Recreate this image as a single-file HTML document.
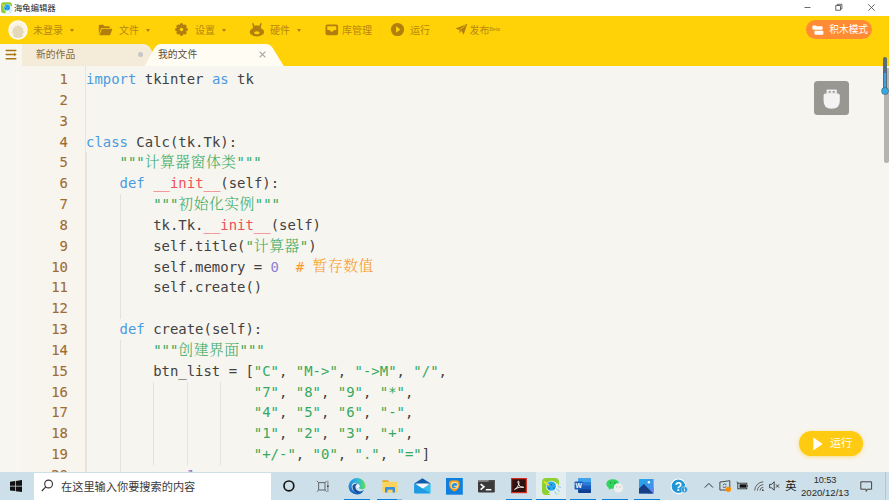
<!DOCTYPE html>
<html lang="zh-CN">
<head>
<meta charset="utf-8">
<title>海龟编辑器</title>
<style>
html,body{margin:0;padding:0;}
body{width:889px;height:500px;overflow:hidden;position:relative;background:#f7f5f0;font-family:"Liberation Sans","Noto Sans CJK SC",sans-serif;}
.abs{position:absolute;}
#titlebar{position:absolute;left:0;top:0;width:889px;height:16px;background:#fff;}
#titlebar .ttl{position:absolute;left:14px;top:0;height:16px;line-height:16px;font-size:8.350px;color:#1c1c1c;white-space:nowrap;}
#toolbar{position:absolute;left:0;top:16px;width:889px;height:49.500px;background:#ffd107;}
.mi{position:absolute;top:1px;height:28px;line-height:28px;font-size:10px;color:#b8880f;white-space:nowrap;}
.caret{position:absolute;top:12.5px;width:0;height:0;border-left:2.5px solid transparent;border-right:2.5px solid transparent;border-top:3px solid #b27f0e;}
#tabs{position:absolute;left:0;top:43.5px;width:889px;height:22px;z-index:3;}
.tabtxt{position:absolute;top:0;height:21.5px;line-height:21.5px;font-size:9.8px;white-space:nowrap;}
#editor{position:absolute;left:0;top:65.500px;width:889px;height:407px;background:#f7f5f0;overflow:hidden;}
#leftstrip{position:absolute;left:0;top:0;width:22px;height:407px;background:#f8f6f1;}
#gutter{position:absolute;left:22px;top:0;width:63px;height:407px;background:#f7f5ee;}
#gline{position:absolute;left:85px;top:0;width:1px;height:407px;background:#efe5ca;}
.ln{position:absolute;left:22px;width:46px;text-align:right;height:20.83px;line-height:20.83px;font-family:"DejaVu Sans Mono","Liberation Mono",monospace;font-size:13.947px;color:#9e6c32;-webkit-text-stroke:0.100px #9e6c32;}
.cl{position:absolute;left:86px;height:20.83px;line-height:20.83px;font-family:"DejaVu Sans Mono","Liberation Mono","Noto Serif CJK SC",monospace;font-size:13.947px;color:#414141;white-space:pre;}
.z{font-size:14.800px;letter-spacing:0.500px;font-weight:300;line-height:0;position:relative;top:-0.200px;}
.k{color:#4a9be0;}
.s{color:#35a95e;}
.r{color:#ee5058;}
.n{color:#8b7fd6;}
.c{color:#f99a27;}
.guide{position:absolute;width:1px;background:#e6e2da;}
#taskbar{position:absolute;left:0;top:471.800px;width:889px;height:28.200px;background:#cddfe8;}
#search{position:absolute;left:34px;top:1.200px;width:237px;height:28px;background:#fff;}
#search span{position:absolute;left:27px;top:0;height:28px;line-height:29px;font-size:11.2px;color:#3a3a3a;white-space:nowrap;}
.ul{position:absolute;top:26.800px;height:2px;background:#0a7fd9;}
</style>
</head>
<body>

<div id="titlebar">
  <svg class="abs" style="left:0.700px;top:1.900px" width="13" height="12" viewBox="0 0 20 18">
    <rect x="0" y="0" width="17" height="17" rx="4" fill="#8ed032"/>
    <path d="M6 15.600 Q11 12.600 15.400 5 L17 8 L17 13 Q17 17 13 17 H9 Z" fill="#f4fbff"/>
    <circle cx="9.700" cy="8.400" r="5.600" fill="#f2fbff"/>
    <circle cx="9.300" cy="8.100" r="4.700" fill="#2ba7ee"/>
    <path d="M8.600 5.600 L10.400 7 L9.200 7.600 Z M6 9.200 L8.200 10.200 L6.800 11.200 Z M10.800 10 L12.400 9.200 L12.200 11 Z" fill="#1b4f8a"/>
    <path d="M2.200 3.800 L6.600 7" stroke="#f6e22a" stroke-width="1.500" stroke-linecap="round"/>
    <path d="M12.400 13 L14.400 16 M14.400 10.800 L17.400 13.200" stroke="#7fd0e8" stroke-width="1" stroke-linecap="round"/>
  </svg>
  <div class="ttl">海龟编辑器</div>
  <svg class="abs" style="left:800px;top:0" width="89" height="16" viewBox="0 0 89 16">
    <path d="M4.5 7.5 H10.5" stroke="#444" stroke-width="0.8" fill="none"/>
    <rect x="35.8" y="5.6" width="4.6" height="4.6" stroke="#444" stroke-width="0.8" fill="#fff"/>
    <path d="M37.3 5.6 V4.3 H41.9 V8.9 H40.4" stroke="#444" stroke-width="0.8" fill="none"/>
    <path d="M68.3 4.3 L74.7 10.7 M74.7 4.3 L68.3 10.7" stroke="#444" stroke-width="0.8" fill="none"/>
  </svg>
</div>

<div id="toolbar">
  <!-- avatar -->
  <svg class="abs" style="left:7.050px;top:2.500px" width="22" height="22" viewBox="0 0 22 22">
    <circle cx="11" cy="11" r="9.750" fill="#fffdf3"/>
    <circle cx="11" cy="11" r="8.500" fill="#faf4e2"/>
    <path d="M11 5.400 L12.300 7.600 L14.200 6.800 L14.400 9 L16.600 9.400 L15.800 11.400 L17.400 13.200 L15.600 14.400 Q16.400 17.600 14 18.600 Q11 19.400 8 18.600 Q5.600 17.600 6.400 14.400 L4.600 13.200 L6.200 11.400 L5.400 9.400 L7.600 9 L7.800 6.800 L9.700 7.600 Z" fill="#e6d9ba"/>
  </svg>
  <div class="mi" style="left:33px">未登录</div><div class="caret" style="left:69.5px"></div>

  <svg class="abs" style="left:98px;top:8px" width="15" height="12" viewBox="0 0 15 12">
    <path d="M0.8 10.6 V1.6 Q0.8 0.8 1.6 0.8 H5.2 L6.4 2.2 H11 Q11.8 2.2 11.8 3 V4 H4 Q3.2 4 2.9 4.8 Z" fill="#b27f0e"/>
    <path d="M1.4 11.2 L3.6 5.4 Q3.8 4.8 4.5 4.8 H13.6 Q14.5 4.8 14.2 5.6 L12.4 10.5 Q12.1 11.2 11.4 11.2 Z" fill="#b27f0e"/>
  </svg>
  <div class="mi" style="left:119px">文件</div><div class="caret" style="left:145.5px"></div>

  <svg class="abs" style="left:174px;top:6.1px" width="15" height="15" viewBox="0 0 15 15">
    <g fill="#b27f0e"><circle cx="7.5" cy="7.5" r="4.9"/><circle cx="12.20" cy="7.50" r="1.75"/><circle cx="10.82" cy="10.82" r="1.75"/><circle cx="7.50" cy="12.20" r="1.75"/><circle cx="4.18" cy="10.82" r="1.75"/><circle cx="2.80" cy="7.50" r="1.75"/><circle cx="4.18" cy="4.18" r="1.75"/><circle cx="7.50" cy="2.80" r="1.75"/><circle cx="10.82" cy="4.18" r="1.75"/></g>
    <circle cx="7.5" cy="7.5" r="1.7" fill="#ffd107"/>
  </svg>
  <div class="mi" style="left:195px">设置</div><div class="caret" style="left:221.5px"></div>

  <svg class="abs" style="left:249px;top:6px" width="16" height="15" viewBox="0 0 16 15">
    <g fill="#b27f0e">
      <path d="M4.700 4.600 L3.900 1.700 M11.100 4.600 L11.900 1.700" stroke="#b27f0e" stroke-width="1.500" stroke-linecap="round"/>
      <rect x="3.900" y="3.400" width="8" height="6" rx="2.400"/>
      <ellipse cx="7.900" cy="9.900" rx="7.200" ry="4.500"/>
    </g>
    <ellipse cx="7.900" cy="10.800" rx="2.700" ry="1.500" fill="#ffd107"/>
  </svg>
  <div class="mi" style="left:270px">硬件</div><div class="caret" style="left:296.900px"></div>

  <svg class="abs" style="left:325px;top:7.5px" width="14" height="12" viewBox="0 0 14 12">
    <rect x="0.5" y="0.5" width="12.6" height="10.8" rx="2" fill="#b27f0e"/>
    <path d="M2.3 2.3 H11.3 V6 H8.8 Q8.8 7.8 6.8 7.8 Q4.8 7.8 4.8 6 H2.3 Z" fill="#ffd107"/>
  </svg>
  <div class="mi" style="left:342px">库管理</div>
  <div class="abs" style="left:380px;top:8px;width:1px;height:11px;background:#facd07"></div>

  <svg class="abs" style="left:389.800px;top:6.100px" width="15" height="15" viewBox="0 0 15 15">
    <circle cx="7.5" cy="7.5" r="6.6" fill="#b27f0e"/>
    <path d="M6 4.3 L10.4 7.5 L6 10.7 Z" fill="#ffd107"/>
  </svg>
  <div class="mi" style="left:410px">运行</div>

  <svg class="abs" style="left:455px;top:7px" width="13" height="13" viewBox="0 0 13 13">
    <path d="M0.6 5.6 L12.4 0.8 L8.6 11.8 L6.2 7.6 L4.6 10.6 L4.4 7 Z" fill="#b27f0e"/>
    <path d="M4.4 7 L11 2" stroke="#ffd107" stroke-width="0.7"/>
  </svg>
  <div class="mi" style="left:469.5px">发布<span style="font-size:5.200px;position:relative;top:-3.300px;letter-spacing:-0.1px">Beta</span></div>

  <!-- blocks mode button -->
  <div class="abs" style="left:805.600px;top:4.200px;width:66.500px;height:18.800px;border-radius:10px;background:#ff8c35"></div>
  <svg class="abs" style="left:812px;top:8.5px" width="12" height="11" viewBox="0 0 12 11">
    <g fill="#fff">
      <path d="M0.4 1.4 Q0.4 0.4 1.4 0.4 H3.6 Q4.4 0.4 4.6 1.2 H9.6 Q10.6 1.2 10.6 2.2 V3.8 Q10.6 4.8 9.6 4.8 H1.4 Q0.4 4.8 0.4 3.8 Z"/>
      <rect x="2.4" y="5.8" width="9" height="3.9" rx="1"/>
    </g>
  </svg>
  <div class="abs" style="left:829.300px;top:4px;height:19.500px;line-height:19.500px;font-size:9.700px;color:#fff;white-space:nowrap">积木模式</div>
</div>

<div id="tabs">
  <div class="abs" style="left:0;top:0;width:22px;height:22px;background:#f8f6f1"></div>
  <svg class="abs" style="left:4.500px;top:5.600px" width="13" height="11" viewBox="0 0 13 11">
    <path d="M1.200 1.400 H10.800 M1.200 5.500 H8.200 M1.200 9.700 H10.800" stroke="#a8740f" stroke-width="1.500" stroke-linecap="round" fill="none"/>
    <path d="M8.900 3.400 L11.600 5.500 L8.900 7.600 Z" fill="#a8740f"/>
  </svg>
  <svg class="abs" style="left:22px;top:0" width="300" height="22" viewBox="0 0 300 22">
    <path d="M0 22 V0 H121 Q126 0 128.500 4.500 L138 22 Z" fill="#f4ecd8"/>
    <path d="M122.700 22 L132.300 4.300 Q134.600 0 139.500 0 H243.500 Q248.500 0 250.900 4.300 L261.800 22 Z" fill="#fefcf3"/>
  </svg>
  <div class="tabtxt" style="left:36px;color:#87683a">新的作品</div>
  <div class="abs" style="left:137.5px;top:8.8px;width:5px;height:5px;border-radius:50%;background:#c9c6c6"></div>
  <div class="tabtxt" style="left:158px;color:#5e4c3a">我的文件</div>
  <svg class="abs" style="left:258.500px;top:7.5px" width="7" height="7" viewBox="0 0 7 7">
    <path d="M0.6 0.6 L6.4 6.4 M6.4 0.6 L0.6 6.4" stroke="#a6a6a6" stroke-width="1.150" fill="none"/>
  </svg>
</div>

<div id="editor">
  <div id="leftstrip"></div>
  <div id="gutter"></div>
  <div id="gline"></div>
  <div id="lines">
    <div class="ln" style="top:3.60px">1</div><div class="cl" style="top:3.60px"><span class="k">import</span> tkinter <span class="k">as</span> tk</div>
    <div class="ln" style="top:24.43px">2</div><div class="cl" style="top:24.43px"></div>
    <div class="ln" style="top:45.26px">3</div><div class="cl" style="top:45.26px"></div>
    <div class="ln" style="top:66.09px">4</div><div class="cl" style="top:66.09px"><span class="k">class</span> Calc(tk.Tk):</div>
    <div class="ln" style="top:86.92px">5</div><div class="cl" style="top:86.92px">    <span class="s">"""<span class="z">计算器窗体类</span>"""</span></div>
    <div class="ln" style="top:107.75px">6</div><div class="cl" style="top:107.75px">    <span class="k">def</span> <span class="r">__init__</span>(self):</div>
    <div class="ln" style="top:128.58px">7</div><div class="cl" style="top:128.58px">        <span class="s">"""<span class="z">初始化实例</span>"""</span></div>
    <div class="ln" style="top:149.41px">8</div><div class="cl" style="top:149.41px">        tk.Tk.<span class="r">__init__</span>(self)</div>
    <div class="ln" style="top:170.24px">9</div><div class="cl" style="top:170.24px">        self.title(<span class="s">"<span class="z">计算器</span>"</span>)</div>
    <div class="ln" style="top:191.07px">10</div><div class="cl" style="top:191.07px">        self.memory = <span class="n">0</span>  <span class="c"># <span class="z">暂存数值</span></span></div>
    <div class="ln" style="top:211.90px">11</div><div class="cl" style="top:211.90px">        self.create()</div>
    <div class="ln" style="top:232.73px">12</div><div class="cl" style="top:232.73px"></div>
    <div class="ln" style="top:253.56px">13</div><div class="cl" style="top:253.56px">    <span class="k">def</span> create(self):</div>
    <div class="ln" style="top:274.39px">14</div><div class="cl" style="top:274.39px">        <span class="s">"""<span class="z">创建界面</span>"""</span></div>
    <div class="ln" style="top:295.22px">15</div><div class="cl" style="top:295.22px">        btn_list = [<span class="s">"C"</span>, <span class="s">"M-&gt;"</span>, <span class="s">"-&gt;M"</span>, <span class="s">"/"</span>,</div>
    <div class="ln" style="top:316.05px">16</div><div class="cl" style="top:316.05px">                    <span class="s">"7"</span>, <span class="s">"8"</span>, <span class="s">"9"</span>, <span class="s">"*"</span>,</div>
    <div class="ln" style="top:336.88px">17</div><div class="cl" style="top:336.88px">                    <span class="s">"4"</span>, <span class="s">"5"</span>, <span class="s">"6"</span>, <span class="s">"-"</span>,</div>
    <div class="ln" style="top:357.71px">18</div><div class="cl" style="top:357.71px">                    <span class="s">"1"</span>, <span class="s">"2"</span>, <span class="s">"3"</span>, <span class="s">"+"</span>,</div>
    <div class="ln" style="top:378.54px">19</div><div class="cl" style="top:378.54px">                    <span class="s">"+/-"</span>, <span class="s">"0"</span>, <span class="s">"."</span>, <span class="s">"="</span>]</div>
    <div class="ln" style="top:399.37px">20</div><div class="cl" style="top:399.37px">        r = <span class="n">1</span></div>
    <div class="guide" style="left:86.2px;top:86.92px;height:333.28px"></div>
    <div class="guide" style="left:119.6px;top:128.58px;height:124.98px"></div>
    <div class="guide" style="left:119.6px;top:274.39px;height:145.81px"></div>
    <div class="guide" style="left:153.2px;top:316.05px;height:83.32px"></div>
    <div class="guide" style="left:186.8px;top:316.05px;height:83.32px"></div>
    <div class="guide" style="left:220.4px;top:316.05px;height:83.32px"></div>
  </div>
  <!-- usb button -->
  <div class="abs" style="left:814.100px;top:15.300px;width:34.900px;height:34.700px;border-radius:3.500px;background:#999792"></div>
  <svg class="abs" style="left:823px;top:23.500px" width="18" height="21" viewBox="0 0 18 21">
    <path d="M3.600 0.600 H13.800 V4.800 H3.600 Z" fill="#f3f3f3"/>
    <rect x="5.600" y="2" width="2.200" height="1.700" fill="#999792"/><rect x="9.600" y="2" width="2.200" height="1.700" fill="#999792"/>
    <path d="M0.600 6.600 Q0.600 4.600 2.600 4.600 H14.800 Q16.800 4.600 16.800 6.600 V12 Q16.800 19.800 8.700 19.800 Q0.600 19.800 0.600 12 Z" fill="#f3f3f3"/>
  </svg>
  <!-- run button -->
  <div class="abs" style="left:799px;top:365.700px;width:63.800px;height:24.600px;border-radius:12.300px;background:#ffcb12;box-shadow:0 1px 4px rgba(255,196,0,0.45)"></div>
  <svg class="abs" style="left:813px;top:371px" width="10" height="14" viewBox="0 0 10 14">
    <path d="M0.800 0.800 Q0.300 0.500 0.300 1.200 V12.800 Q0.300 13.500 0.900 13.100 L9 7.400 Q9.400 7 9 6.600 Z" fill="#fffdf5"/>
  </svg>
  <div class="abs" style="left:830px;top:365.700px;height:24.600px;line-height:24.600px;font-size:11.100px;color:#fffdf5;white-space:nowrap">运行</div>
  <!-- scrollbar -->
  <div class="abs" style="left:884.300px;top:2.500px;width:5px;height:95.200px;border-radius:0 0 2.500px 2.500px;background:#b6b4b1"></div>
</div>

<div id="taskbar">
  <!-- start -->
  <svg class="abs" style="left:10px;top:8.300px" width="12" height="12" viewBox="0 0 12 12">
    <path d="M0 1.700 L5.100 1 V5.700 H0 Z M5.800 0.900 L12 0 V5.700 H5.800 Z M0 6.400 H5.100 V11.100 L0 10.400 Z M5.800 6.400 H12 V12 L5.800 11.200 Z" fill="#111"/>
  </svg>
  <div id="search">
    <svg class="abs" style="left:7px;top:6.500px" width="13" height="13" viewBox="0 0 13 13">
      <circle cx="7.600" cy="5" r="3.900" fill="none" stroke="#333" stroke-width="1.100"/>
      <path d="M4.800 7.800 L0.800 12" stroke="#333" stroke-width="1.200" fill="none"/>
    </svg>
    <span>在这里输入你要搜索的内容</span>
  </div>
  <!-- cortana -->
  <svg class="abs" style="left:282px;top:7.500px" width="14" height="14" viewBox="0 0 14 14">
    <circle cx="6.900" cy="6.900" r="4.900" fill="none" stroke="#161616" stroke-width="1.700"/>
  </svg>
  <!-- task view -->
  <svg class="abs" style="left:315.500px;top:8px" width="14" height="13" viewBox="0 0 14 13">
    <rect x="2.600" y="2.600" width="6.400" height="7.400" fill="none" stroke="#6a6f73" stroke-width="1.100"/>
    <path d="M0.800 0.900 L2.600 2.600 M0.800 11.700 L2.600 10 M10.600 0.900 L9 2.600 M10.600 11.700 L9 10" stroke="#6a6f73" stroke-width="1" fill="none"/>
    <path d="M11.900 0.800 V11.800" stroke="#7a7f84" stroke-width="1" fill="none"/>
    <rect x="11.200" y="5.600" width="1.400" height="1.300" fill="#222"/>
  </svg>
  <!-- edge -->
  <svg class="abs" style="left:348.400px;top:5.500px" width="18" height="18" viewBox="0 0 18 18">
    <defs>
      <linearGradient id="eg1" x1="0" y1="0" x2="0" y2="1"><stop offset="0" stop-color="#2a9be6"/><stop offset="1" stop-color="#1560b8"/></linearGradient>
      <linearGradient id="eg2" x1="0" y1="0" x2="1" y2="0"><stop offset="0" stop-color="#1f86dc"/><stop offset="0.450" stop-color="#2db4e2"/><stop offset="0.750" stop-color="#3fcc9c"/><stop offset="1" stop-color="#6fdc4c"/></linearGradient>
    </defs>
    <path d="M0.500 9.400 A8.600 8.600 0 0 1 17.600 8.400 Q17.800 12 14.400 12.300 Q11.200 12.400 10.900 10.600 Q12.400 9.200 11.200 7.400 Q9.600 5.400 6.600 5.800 Q2.400 6.400 0.500 9.400 Z" fill="url(#eg2)"/>
    <path d="M0.500 9.600 Q1.400 5.800 5.400 5.400 Q2.600 8.600 4.200 12.200 Q6.200 16 10.800 15.600 Q13.800 15.200 16 13 Q13.600 17.600 9 17.600 Q1.200 17.200 0.500 9.600 Z" fill="url(#eg1)"/>
    <path d="M4.400 9 Q5.800 6 9.800 6.600 Q7 8.200 7.400 10.800 Q8.200 14 12 14.400 Q14.400 14.400 16 13 Q13.400 16.600 9.800 16.200 Q4.600 15.400 4.400 9 Z" fill="#13509c"/>
    <ellipse cx="9.700" cy="9.300" rx="1.900" ry="1.700" fill="#e8f2f8"/>
  </svg>
  <div class="ul" style="left:344px;width:26px"></div>
  <!-- explorer -->
  <svg class="abs" style="left:381.500px;top:8px" width="16" height="13" viewBox="0 0 16 13">
    <path d="M0.400 1.200 Q0.400 0.300 1.300 0.300 H5.600 Q6.400 0.300 6.600 1.200 L7 2.600 H0.400 Z" fill="#e3a216"/>
    <rect x="0.400" y="1.800" width="15" height="10.600" rx="0.800" fill="#fdd35b"/>
    <path d="M3 12.400 V8 Q3 7 4 7 H12 Q13 7 13 8 V12.400 H10.600 V9.700 H5.400 V12.400 Z" fill="#3a8fde"/>
  </svg>
  <div class="ul" style="left:376.500px;width:20.400px"></div><div class="ul" style="left:396.900px;width:5.300px;background:#84b9e6"></div>
  <!-- mail -->
  <svg class="abs" style="left:413.500px;top:6.300px" width="17" height="16" viewBox="0 0 17 16">
    <path d="M0.200 5.400 L8.400 0.200 L16.600 5.400 L8.400 8 Z" fill="#0f5cad"/>
    <path d="M1.800 5.400 H15 L8.600 11 Z" fill="#f4f8fb"/>
    <path d="M0.200 5.400 L8.600 10.800 L16.600 5.400 V14.600 Q16.600 15.400 15.800 15.400 H1 Q0.200 15.400 0.200 14.600 Z" fill="#36bdf0"/>
    <path d="M0.200 5.400 L16.400 15.300 H1 Q0.200 15.400 0.200 14.600 Z" fill="#1f9ae3"/>
  </svg>
  <!-- shield browser -->
  <svg class="abs" style="left:446px;top:6.200px" width="17" height="17" viewBox="0 0 17 17">
    <rect x="0" y="0" width="16.800" height="16.700" fill="#0f7fe0"/>
    <path d="M8.400 2.600 Q10 1.800 11.800 2.400 Q14.400 3.600 13.600 7.400 Q12.800 11.400 8.400 13.600 Q4 11.400 3.200 7.400 Q2.400 3.600 5 2.400 Q6.800 1.800 8.400 2.600 Z" fill="#f59a1c"/>
    <ellipse cx="8.400" cy="7.200" rx="3.900" ry="3.800" fill="#fbe08a"/>
    <path d="M5.600 8 Q6 4.800 9.600 5 Q11.600 5.400 11.400 7.400 L7.400 8 Q8 9.600 10.800 9 Q9.400 10.800 7.200 10.200 Q5.600 9.600 5.600 8 Z" fill="#2a8fe0"/>
  </svg>
  <!-- terminal -->
  <svg class="abs" style="left:478.200px;top:8px" width="17" height="13" viewBox="0 0 17 13">
    <rect x="0" y="0" width="16.800" height="12.400" rx="1.200" fill="#3a3a3a"/>
    <path d="M0 1.200 Q0 0 1.200 0 H10.800 V1.800 H0 Z" fill="#8c8c8c"/>
    <rect x="10.800" y="0" width="6" height="1.800" fill="#4a4a4a"/>
    <path d="M2.600 4.200 L6 6.800 L2.600 9.600" stroke="#fff" stroke-width="1.500" fill="none"/>
    <path d="M7.800 9.700 H13.400" stroke="#fff" stroke-width="1.500" fill="none"/>
  </svg>
  <!-- acrobat -->
  <svg class="abs" style="left:511px;top:6.400px" width="16" height="16" viewBox="0 0 16 16">
    <rect x="0.600" y="0.600" width="14.700" height="14" fill="#2e1210" stroke="#d9281c" stroke-width="1.200"/>
    <path d="M3.600 11.600 Q6 10.600 7.400 7.200 Q8.400 4.400 7.700 3.200 Q7 2.600 6.900 3.900 Q7 6.200 9.300 8.600 Q11.200 10 12.500 9.500 Q13 8.800 11.600 8.800 Q8 9 4.600 10.600 Q3.200 11.400 3.600 11.600 Z" fill="none" stroke="#f3eeee" stroke-width="0.950"/>
  </svg>
  <div class="ul" style="left:506px;width:26px"></div>
  <!-- active app: turtle editor -->
  <div class="abs" style="left:535.800px;top:0;width:30.700px;height:29px;background:#e2edf2"></div>
  <svg class="abs" style="left:542.400px;top:5.800px" width="20" height="18" viewBox="0 0 20 18">
    <rect x="0" y="0" width="17" height="17" rx="4" fill="#8ed032"/>
    <path d="M6 15.600 Q11 12.600 15.400 5 L17 8 L17 13 Q17 17 13 17 H9 Z" fill="#e2edf2"/>
    <circle cx="9.700" cy="8.400" r="5.600" fill="#f2fbff"/>
    <circle cx="9.300" cy="8.100" r="4.700" fill="#2ba7ee"/>
    <path d="M8.600 5.600 L10.400 7 L9.200 7.600 Z M6 9.200 L8.200 10.200 L6.800 11.200 Z M10.800 10 L12.400 9.200 L12.200 11 Z" fill="#1b4f8a"/>
    <path d="M2.200 3.800 L6.600 7" stroke="#f6e22a" stroke-width="1.500" stroke-linecap="round"/>
    <path d="M12.400 13 L14.400 16 M14.400 10.800 L17.400 13.200 M16 8.400 L18.600 9.600" stroke="#7fd0e8" stroke-width="1" stroke-linecap="round"/>
  </svg>
  <div class="ul" style="left:535.800px;width:30.700px"></div>
  <!-- word -->
  <svg class="abs" style="left:574px;top:6.400px" width="18" height="16" viewBox="0 0 18 16">
    <rect x="4.200" y="0.300" width="12.800" height="14.600" rx="1" fill="#2b7cd3"/>
    <path d="M4.200 1.300 Q4.200 0.300 5.200 0.300 H16 Q17 0.300 17 1.300 V4 H4.200 Z" fill="#3fa2ec"/>
    <rect x="4.200" y="7.600" width="12.800" height="3.700" fill="#185abd"/>
    <path d="M4.200 11.300 H17 V13.900 Q17 14.900 16 14.900 H5.200 Q4.200 14.900 4.200 13.900 Z" fill="#103f91"/>
    <rect x="0.600" y="3.400" width="8.200" height="8.200" rx="0.900" fill="#1a5dbe"/>
    <text x="4.700" y="10" font-family="Liberation Sans, sans-serif" font-size="6.800" font-weight="bold" fill="#fff" text-anchor="middle">W</text>
  </svg>
  <div class="ul" style="left:570.200px;width:25.500px"></div>
  <!-- wechat -->
  <svg class="abs" style="left:606px;top:7px" width="18" height="14" viewBox="0 0 18 14">
    <ellipse cx="6.700" cy="5" rx="6.400" ry="4.800" fill="#2fd25a"/>
    <path d="M3 8.400 L2.600 10.600 L5.600 9.400 Z" fill="#2fd25a"/>
    <circle cx="4.600" cy="3.800" r="0.700" fill="#1f8f3c"/><circle cx="8.800" cy="3.800" r="0.700" fill="#1f8f3c"/>
    <circle cx="12.400" cy="8.900" r="4.700" fill="#efefef"/>
    <circle cx="10.800" cy="7.900" r="0.600" fill="#b0b0b0"/><circle cx="14" cy="7.900" r="0.600" fill="#b0b0b0"/>
  </svg>
  <div class="ul" style="left:602.200px;width:25.800px"></div>
  <!-- photos -->
  <svg class="abs" style="left:639.400px;top:7.200px" width="15" height="15" viewBox="0 0 15 15">
    <defs><linearGradient id="pg" x1="0" y1="0" x2="1" y2="1"><stop offset="0" stop-color="#25a8ec"/><stop offset="1" stop-color="#4b86e8"/></linearGradient></defs>
    <rect x="0" y="0" width="14.600" height="14.600" rx="0.600" fill="url(#pg)"/>
    <path d="M8 14.600 L14.600 8 V14 Q14.600 14.600 14 14.600 Z" fill="#6a80ea"/>
    <path d="M0 14 V9.400 L4.900 4.900 L14.200 14.600 H0.600 Q0 14.600 0 14 Z" fill="#173f86"/>
    <circle cx="9.900" cy="3.300" r="1.250" fill="#fff"/>
  </svg>
  <div class="ul" style="left:634.300px;width:25.500px"></div>
  <!-- help -->
  <svg class="abs" style="left:670px;top:6px" width="19" height="18" viewBox="0 0 19 18">
    <circle cx="8.400" cy="8.300" r="7.300" fill="#1e96d6" stroke="#fff" stroke-width="1.100"/>
    <text x="8.400" y="12.600" font-family="Liberation Sans, sans-serif" font-size="12" font-weight="bold" fill="#fff" text-anchor="middle">?</text>
    <circle cx="14.400" cy="11.500" r="3.100" fill="#2a9adb" stroke="#d9eef9" stroke-width="0.500"/>
    <rect x="13.950" y="10.800" width="0.900" height="2.400" fill="#fff"/><rect x="13.950" y="9.500" width="0.900" height="0.800" fill="#fff"/>
  </svg>
  <!-- tray chevron -->
  <svg class="abs" style="left:703.500px;top:10.700px" width="10" height="7" viewBox="0 0 10 7">
    <path d="M0.800 5.600 L4.900 1.400 L9 5.600" stroke="#333" stroke-width="1" fill="none"/>
  </svg>
  <!-- sync icon with orange dot -->
  <svg class="abs" style="left:718.700px;top:8.400px" width="14" height="13" viewBox="0 0 14 13">
    <path d="M0.900 2.100 L10.800 0.700 V10 H0.900 Z" fill="none" stroke="#3a3a3a" stroke-width="0.900"/>
    <path d="M3.800 5.200 Q5.400 3 7.400 4.600 M7.400 6.400 Q5.800 8.400 3.800 7" stroke="#3a3a3a" stroke-width="0.800" fill="none"/>
    <circle cx="9.400" cy="9.300" r="2.600" fill="#ff8c00"/>
  </svg>
  <!-- battery -->
  <svg class="abs" style="left:735.800px;top:9.600px" width="12" height="9" viewBox="0 0 12 9">
    <path d="M0.600 1 Q2 0.800 2 2.400" stroke="#333" stroke-width="0.800" fill="none"/>
    <rect x="1.800" y="2.200" width="9" height="5.600" fill="none" stroke="#333" stroke-width="0.900"/>
    <rect x="3.600" y="3.300" width="6.400" height="3.400" fill="#111"/>
    <rect x="10.800" y="4" width="0.800" height="2" fill="#333"/>
  </svg>
  <!-- wifi -->
  <svg class="abs" style="left:754px;top:9.500px" width="11" height="11" viewBox="0 0 11 11">
    <path d="M0.700 9.600 A9 9 0 0 1 9.300 0.800" stroke="#555" stroke-width="0.900" fill="none"/>
    <path d="M3.400 9.600 A6.200 6.200 0 0 1 9.300 3.600" stroke="#555" stroke-width="0.900" fill="none"/>
    <path d="M6 9.600 A3.400 3.400 0 0 1 9.300 6.300" stroke="#555" stroke-width="0.900" fill="none"/>
    <circle cx="8.800" cy="9.200" r="0.900" fill="#444"/>
  </svg>
  <!-- volume muted -->
  <svg class="abs" style="left:769.300px;top:9.600px" width="12" height="11" viewBox="0 0 12 11">
    <path d="M0.600 3.300 H2.600 L5.200 0.800 V9.200 L2.600 6.800 H0.600 Z" fill="none" stroke="#333" stroke-width="0.900"/>
    <path d="M7 3.400 L10 6.600 M10 3.400 L7 6.600" stroke="#333" stroke-width="0.900"/>
  </svg>
  <div class="abs" style="left:785.200px;top:7.800px;font-size:11.300px;line-height:13px;color:#1a1a1a">英</div>
  <div class="abs" id="clk1" style="left:801px;top:2.200px;width:48px;text-align:center;font-size:9.200px;line-height:12px;color:#2a2a2a;letter-spacing:-0.100px">10:53</div>
  <div class="abs" id="clk2" style="left:795px;top:15.100px;width:60px;text-align:center;font-size:9.600px;line-height:12px;color:#2a2a2a">2020/12/13</div>
  <!-- notification -->
  <svg class="abs" style="left:860px;top:9px" width="13" height="12" viewBox="0 0 13 12">
    <path d="M0.800 0.800 H11.600 V8.200 H7.600 L6.200 10.400 L6.200 8.200 H0.800 Z" fill="none" stroke="#333" stroke-width="0.900"/>
  </svg>
  <div class="abs" style="left:884.500px;top:0;width:1px;height:29px;background:#b6c5cf"></div>
</div>

<div class="abs" style="left:882.900px;top:57px;width:3.800px;height:33px;border-radius:1.900px 1.900px 0 0;background:#586b7a"></div>
<div class="abs" style="left:883.700px;top:73px;width:2.200px;height:16px;background:#3aa3df"></div>
<div class="abs" style="left:881.600px;top:88.100px;width:6.200px;height:6.200px;border-radius:50%;background:#38a8e2;box-shadow:0 0 0 0.700px #3f6e8e"></div>


</body>
</html>
